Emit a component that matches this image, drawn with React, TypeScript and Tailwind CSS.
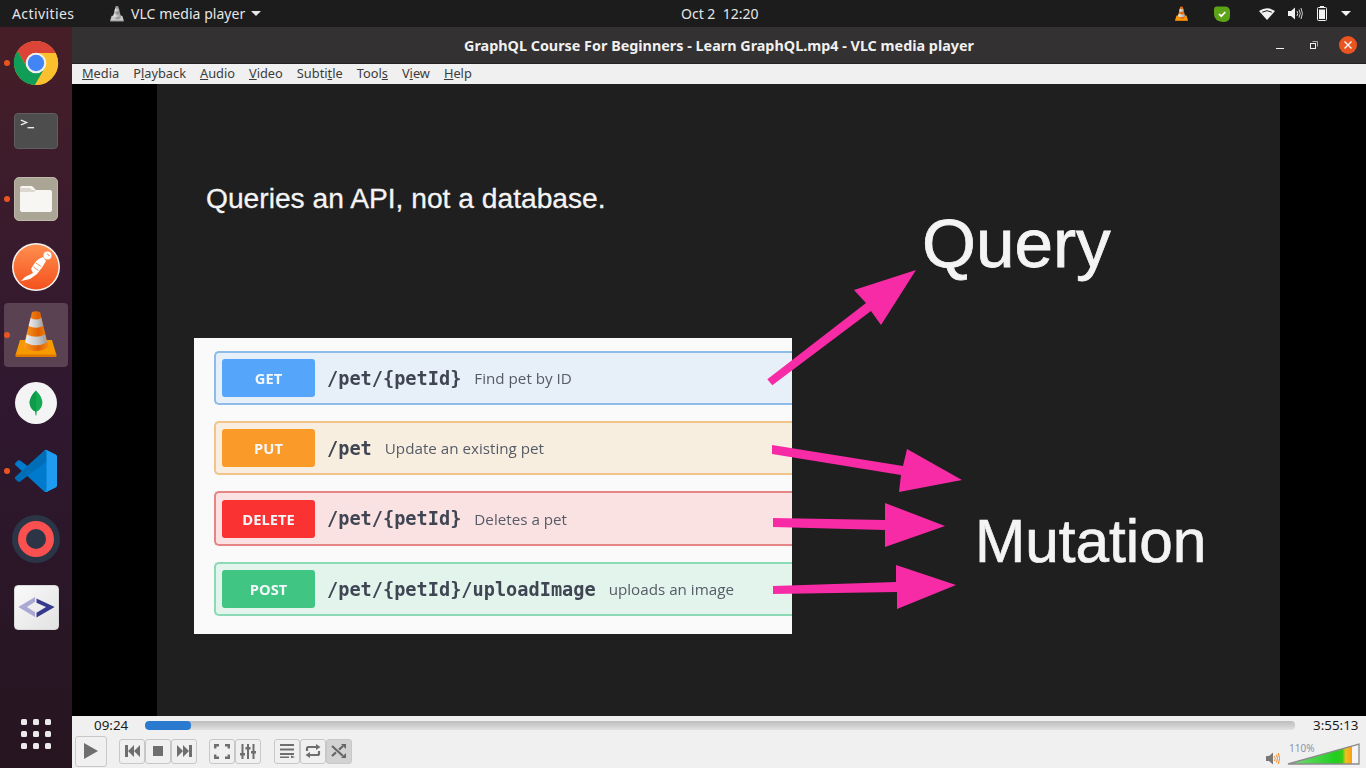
import React from "react";

const UI = "font-['Noto_Sans','Open_Sans',sans-serif]";

function Cone({ id, grey = false, className = "" }: { id: string; grey?: boolean; className?: string }) {
  const a = grey ? "#d8d8d8" : "#ffa028";
  const b = grey ? "#8a8a8a" : "#e06000";
  return (
    <svg viewBox="0 0 48 48" className={className}>
      <defs>
        <linearGradient id={id} x1="0" x2="1" y1="0" y2="0">
          <stop offset="0" stopColor={a} />
          <stop offset="0.6" stopColor={b} />
          <stop offset="1" stopColor={grey ? "#b0b0b0" : "#f08a18"} />
        </linearGradient>
        <linearGradient id={`${id}b`} x1="0" x2="1" y1="0" y2="0">
          <stop offset="0" stopColor="#efefef" />
          <stop offset="0.55" stopColor={grey ? "#bdbdbd" : "#c9c9c9"} />
          <stop offset="1" stopColor="#9c9c9c" />
        </linearGradient>
      </defs>
      <path d="M8 29 L3.5 44 Q3.3 46 5 46 H43 Q44.7 46 44.4 44 L40 29 Z" fill={grey ? "#c8c8c8" : "#f79a00"} />
      <path d="M3.6 43.5 Q3.3 46 5 46 H43 Q44.7 46 44.4 43.5 Z" fill={grey ? "#8d8d8d" : "#e07800"} />
      <path d="M20 1 Q24 -0.5 28 1 L36.5 36 Q24 44 11.5 36 Z" fill={`url(#${id})`} />
      <path d="M18.6 7 Q24 10 29.4 7 L31.3 15 Q24 18.5 16.7 15 Z" fill={`url(#${id}b)`} />
      <path d="M14.9 23.5 Q24 28 33.1 23.5 L34.9 31.5 Q24 37 13.1 31.5 Z" fill={`url(#${id}b)`} />
    </svg>
  );
}

function Chrome() {
  const p = "M24 14 L43.6 14 A22 22 0 0 0 5.54 12.03 L15.34 29 A10 10 0 0 1 24 14 Z";
  return (
    <svg viewBox="0 0 48 48" className="w-[48px] h-[48px]">
      <circle cx="24" cy="24" r="22" fill="#fbc02d" />
      <path d={p} fill="#db4437" />
      <path d={p} fill="#fbc02d" transform="rotate(120 24 24)" />
      <path d={p} fill="#0f9d58" transform="rotate(240 24 24)" />
      <circle cx="24" cy="24" r="10.3" fill="#f1f1f1" />
      <circle cx="24" cy="24" r="8.2" fill="#4285f4" />
    </svg>
  );
}

function Terminal() {
  return (
    <div className="w-[44px] h-[36px] rounded-[4px] bg-[#4d4d4d] border border-[#5f5f5f] flex">
      <svg viewBox="0 0 44 36" className="w-full h-full">
        <path d="M6 6.5 L12 9 L6 11.5" fill="none" stroke="#f2f2f2" strokeWidth="1.4" />
        <path d="M13 14.5 H20" stroke="#f2f2f2" strokeWidth="1.4" />
      </svg>
    </div>
  );
}

function Files() {
  return (
    <div className="w-[44px] h-[44px] rounded-[5px] bg-[#aba595] flex items-center justify-center border border-[#bdb8a9]">
      <svg viewBox="0 0 32 28" className="w-[32px] h-[28px]">
        <path d="M2 1 H12 L16 5 H30 Q32 5 32 7 V25 Q32 27 30 27 H2 Q0 27 0 25 V3 Q0 1 2 1Z" fill="#f8f6f3" />
        <path d="M0 7 H14 L16 5 H12 L10 3 H0Z" fill="#dcd8cf" />
      </svg>
    </div>
  );
}

function Postman() {
  return (
    <svg viewBox="0 0 48 48" className="w-[48px] h-[48px]">
      <defs>
        <linearGradient id="pm" x1="0" x2="0" y1="0" y2="1">
          <stop offset="0" stopColor="#ff8f4f" />
          <stop offset="1" stopColor="#f4511e" />
        </linearGradient>
      </defs>
      <circle cx="24" cy="24" r="24" fill="#f7f3f0" />
      <circle cx="24" cy="24" r="22.5" fill="url(#pm)" />
      <path d="M31 14 Q25 15 19 26 L21 30 L13 34 L9 38 L18 36 L25 31 Q31 24 34 18Z" fill="#fff" />
      <path d="M24 20 L29 23.5 M21.5 24 L26.5 27.5" stroke="#ff8a50" strokeWidth="1" />
      <circle cx="35.5" cy="12.5" r="4" fill="#fff" />
      <path d="M35 10.5 L37.5 13" stroke="#f4622a" strokeWidth="1" />
    </svg>
  );
}

function Mongo() {
  return (
    <div className="w-[42px] h-[42px] rounded-full bg-[#f4f4f4] flex items-center justify-center">
      <svg viewBox="0 0 20 36" className="w-[14px] h-[28px]">
        <path d="M10 0 Q20 10 19 19 Q18 27 11 30 L10.5 36 L9.5 36 L9 30 Q2 27 1 19 Q0 10 10 0Z" fill="#13aa52" />
        <path d="M10 0 Q0 10 1 19 Q2 27 9 30 L10 36Z" fill="#0f9b4a" />
      </svg>
    </div>
  );
}

function VSCode() {
  return (
    <svg viewBox="0 0 100 100" className="w-[42px] h-[42px]">
      <path fill="#007acc" d="M70.9119 99.3171C72.4869 99.9307 74.2828 99.8914 75.8725 99.1264L96.4608 89.2197C98.6242 88.1787 100 85.9892 100 83.5872V16.4133C100 14.0113 98.6243 11.8218 96.4609 10.7808L75.8725 0.873756C73.7862 -0.130129 71.3446 0.11576 69.5135 1.44695C69.252 1.63711 69.0028 1.84943 68.769 2.08341L29.3551 38.0415L12.1872 25.0096C10.589 23.7965 8.35363 23.8959 6.86933 25.2461L1.36303 30.2549C-0.452552 31.9064 -0.454633 34.7627 1.35853 36.417L16.2471 50.0001L1.35853 63.5832C-0.454633 65.2374 -0.452552 68.0938 1.36303 69.7453L6.86933 74.7541C8.35363 76.1043 10.589 76.2037 12.1872 74.9905L29.3551 61.9587L68.769 97.9167C69.3925 98.5406 70.1246 99.0104 70.9119 99.3171ZM75.0152 27.2989L45.1091 50.0001L75.0152 72.7012V27.2989Z" />
      <path fill="#0065a9" d="M96.4614 10.7962L75.8569 0.875542C73.4719 -0.272773 70.6217 0.211611 68.75 2.08333L1.29858 63.5832C-0.515693 65.2373 -0.513607 68.0937 1.30308 69.7452L6.81272 74.754C8.29793 76.1042 10.5347 76.2036 12.1338 74.9905L93.3609 13.3699C96.086 11.3026 100 13.2462 100 16.6667V16.4275C100 14.0265 98.6246 11.8378 96.4614 10.7962Z" opacity="0.6" />
      <path fill="#1f9cf0" d="M75.8578 99.1263C73.4721 100.274 70.6219 99.7885 68.75 97.9166C71.0564 100.223 75 98.5895 75 95.3278V4.67213C75 1.41039 71.0564 -0.223106 68.75 2.08329C70.6219 0.211402 73.4721 -0.273666 75.8578 0.873633L96.4587 10.7807C98.6234 11.8217 100 14.0112 100 16.4132V83.5871C100 85.9891 98.6234 88.1786 96.4586 89.2196L75.8578 99.1263Z" />
    </svg>
  );
}

function Ring() {
  return (
    <svg viewBox="0 0 48 48" className="w-[48px] h-[48px]">
      <circle cx="24" cy="24" r="24" fill="#2b3546" />
      <circle cx="24" cy="24" r="14" fill="none" stroke="#fb5050" strokeWidth="8" />
    </svg>
  );
}

function Sqlite() {
  return (
    <div className="w-[45px] h-[45px] rounded-[4px] border border-[#d8d8d8] bg-gradient-to-br from-[#fafafa] to-[#e2e2e2]">
      <svg viewBox="0 0 45 45" className="w-full h-full">
        <path d="M3.5 22 L21 11.5 V16.5 L12.5 22 L21 27.5 V32.5 Z" fill="#a9a9d3" />
        <path d="M41.5 22 L22.5 13 V17.5 L32.5 22 L22.5 28 V33 Z" fill="#363a8e" />
      </svg>
    </div>
  );
}

function DockItem({ dot, active, children }: { dot?: boolean; active?: boolean; children: React.ReactNode }) {
  return (
    <div className="relative h-[68px] w-[72px] flex items-center justify-center">
      {active && <div className="absolute left-[4px] top-[2px] w-[64px] h-[64px] rounded-[4px] bg-[#5a4253]" />}
      {dot && <div className="absolute left-[4px] top-[31px] w-[6px] h-[6px] rounded-full bg-[#e95420]" />}
      <div className="relative flex">{children}</div>
    </div>
  );
}

function Dock() {
  return (
    <div className="w-[72px] shrink-0 flex flex-col pt-[2px] bg-gradient-to-b from-[#461e27] via-[#2f1830] to-[#26151f]">
      <DockItem dot><Chrome /></DockItem>
      <DockItem><Terminal /></DockItem>
      <DockItem dot><Files /></DockItem>
      <DockItem><Postman /></DockItem>
      <DockItem dot active><Cone id="dockcone" className="w-[48px] h-[48px]" /></DockItem>
      <DockItem><Mongo /></DockItem>
      <DockItem dot><VSCode /></DockItem>
      <DockItem><Ring /></DockItem>
      <DockItem><Sqlite /></DockItem>
      <div className="mt-auto mb-[19px] ml-[21px] grid grid-cols-3 gap-[6px] w-fit">
        {Array.from({ length: 9 }).map((_, i) => (
          <div key={i} className="w-[6px] h-[6px] rounded-[1.5px] bg-[#ebe9ea]" />
        ))}
      </div>
    </div>
  );
}

function TopBar() {
  return (
    <div className={`h-[27px] shrink-0 bg-[#1c1c1c] text-[#e6e6e6] text-[14px] flex items-center relative ${UI}`}>
      <span className="ml-[12px] w-[62px] whitespace-nowrap tracking-[0.4px]">Activities</span>
      <Cone id="barcone" grey className="ml-[35px] w-[16px] h-[16px]" />
      <span className="ml-[6px] whitespace-nowrap tracking-[0.05px]">VLC media player</span>
      <svg viewBox="0 0 10 5" className="ml-[6px] w-[10px] h-[5px]"><path d="M0 0H10L5 5Z" fill="#e6e6e6" /></svg>
      <span className="absolute left-[681px] top-[3px] whitespace-pre">Oct 2  12:20</span>
      <div className="ml-auto flex items-center">
        <Cone id="traycone" className="w-[15px] h-[16px]" />
        <svg viewBox="0 0 16 16" className="ml-[25px] w-[16px] h-[16px]">
          <path d="M3 0.5 H11 Q16 0.5 16 6 V10 Q16 16 9 16 Q0 15 0 8 V3 Q0 0.5 3 0.5Z" fill="#5da318" />
          <path d="M5 8 L7.3 10.2 L11.3 6" fill="none" stroke="#fff" strokeWidth="1.7" />
        </svg>
        <svg viewBox="0 0 16 12" className="ml-[29px] w-[16px] h-[12px]">
          <path d="M0 3 Q8 -2.5 16 3 L8 12Z" fill="#f2f2f2" />
          <path d="M3.2 4.2 Q8 1.2 12.8 4.2" stroke="#1c1c1c" strokeWidth="1" fill="none" />
        </svg>
        <svg viewBox="0 0 15 13" className="ml-[13px] w-[15px] h-[13px]">
          <path d="M0 4 H3 L7 0.5 V12.5 L3 9 H0Z" fill="#f2f2f2" />
          <path d="M9 4 Q10.5 6.5 9 9 M11 2.5 Q13.5 6.5 11 10.5 M13 1 Q15.8 6.5 13 12" stroke="#f2f2f2" strokeWidth="1" fill="none" opacity="0.85" />
        </svg>
        <svg viewBox="0 0 10 15" className="ml-[14px] w-[10px] h-[15px]">
          <rect x="0.5" y="1.5" width="9" height="13" rx="1" fill="none" stroke="#f2f2f2" />
          <rect x="3" y="0" width="4" height="1.5" fill="#f2f2f2" />
          <rect x="2" y="3.5" width="6" height="9.5" fill="#f2f2f2" />
        </svg>
        <svg viewBox="0 0 10 5" className="ml-[14px] mr-[15px] w-[10px] h-[5px]"><path d="M0 0H10L5 5Z" fill="#f2f2f2" /></svg>
      </div>
    </div>
  );
}

function TitleBar() {
  return (
    <div className={`h-[37px] shrink-0 bg-[#333131] border-b border-[#222] grid grid-cols-[1fr_auto_1fr] items-center ${UI}`}>
      <div />
      <span className="text-[14.36px] font-bold text-[#f0f0f0] whitespace-nowrap pt-[1px]">GraphQL Course For Beginners - Learn GraphQL.mp4 - VLC media player</span>
      <div className="flex items-center justify-end pr-[9px]">
        <div className="w-[8px] h-[1px] bg-[#f0f0f0] mt-[6px]" />
        <svg viewBox="0 0 8 8" className="ml-[26px] w-[8px] h-[8px]">
          <path d="M2.5 0.5 H7.5 V5.5" fill="none" stroke="#aaa" />
          <rect x="0.5" y="2.5" width="5" height="5" fill="none" stroke="#f0f0f0" />
        </svg>
        <div className="ml-[21px] w-[18px] h-[18px] rounded-full bg-[#e95420] flex items-center justify-center">
          <svg viewBox="0 0 8 8" className="w-[8px] h-[8px]"><path d="M0.5 0.5 L7.5 7.5 M7.5 0.5 L0.5 7.5" stroke="#fff" strokeWidth="1.3" /></svg>
        </div>
      </div>
    </div>
  );
}

const menus: [string, string, string][] = [
  ["", "M", "edia"],
  ["P", "l", "ayback"],
  ["", "A", "udio"],
  ["", "V", "ideo"],
  ["Subti", "t", "le"],
  ["Tool", "s", ""],
  ["V", "i", "ew"],
  ["", "H", "elp"],
];

function MenuBar() {
  return (
    <div className={`h-[20px] shrink-0 bg-[#f0f0f0] text-[#3c3c3c] text-[12.8px] flex items-center pl-[3px] ${UI}`}>
      {menus.map(([a, b, c], i) => (
        <span key={i} className="px-[7px] whitespace-nowrap">
          {a}
          <span className="underline">{b}</span>
          {c}
        </span>
      ))}
    </div>
  );
}

const rows = [
  { m: "GET", p: "/pet/{petId}", d: "Find pet by ID", row: "bg-[#e7f0f9] border-[#8dbcea]", b: "bg-[#55a5fb]", h: "h-[54px]" },
  { m: "PUT", p: "/pet", d: "Update an existing pet", row: "bg-[#f8eee0] border-[#f1c48c]", b: "bg-[#fa9a28]", h: "h-[54px]" },
  { m: "DELETE", p: "/pet/{petId}", d: "Deletes a pet", row: "bg-[#fae2e2] border-[#e58586]", b: "bg-[#fa3232]", h: "h-[55px]" },
  { m: "POST", p: "/pet/{petId}/uploadImage", d: "uploads an image", row: "bg-[#e2f4ec] border-[#8bdab6]", b: "bg-[#40c583]", h: "h-[54px]" },
];

function Swagger() {
  return (
    <div className="ml-[37px] mt-[124px] w-[598px] h-[296px] bg-[#fafafa] pl-[20px] pt-[13px] flex flex-col gap-[16px] blur-[0.4px]">
      {rows.map((r) => (
        <div key={r.m} className={`${r.h} ${r.row} border-2 border-r-0 rounded-l-[5px] flex items-center pl-[6px]`}>
          <div className={`${r.b} w-[93px] h-[38px] rounded-[3px] flex items-center justify-center pt-[1px] text-[#f4f8fb] text-[14.7px] font-bold font-['Open_Sans',sans-serif]`}>
            {r.m}
          </div>
          <span className="ml-[12px] mt-[1px] text-[18.6px] font-bold text-[#3f4553] font-['DejaVu_Sans_Mono',monospace] whitespace-nowrap">{r.p}</span>
          <span className="ml-[13px] mt-[1px] text-[15.2px] text-[#555b67] font-['Open_Sans',sans-serif] whitespace-nowrap">{r.d}</span>
        </div>
      ))}
    </div>
  );
}

function Arrows() {
  const pts = [
    "767.3,379.3 866,303 854,290 916,270 881,325 871,311 772.3,385.3",
    "772,445 903,466 907,449 962,480 899,492 901,475 772,454",
    "773,518 885,520 885,503 945,526 885,547 885,530 773,527",
    "773,586 896,582 896,565 956,585 897,609 897,592 773,594",
  ];
  return (
    <svg viewBox="157 84 1123 632" className="absolute left-0 top-0 w-[1123px] h-[632px]">
      {pts.map((p) => (
        <polygon key={p} points={p} fill="#f72ba6" />
      ))}
    </svg>
  );
}

function Video() {
  return (
    <div className="flex-1 min-h-0 bg-black pl-[85px]">
      <div className="relative w-[1123px] h-full bg-[#1f1f1f] font-['Liberation_Sans',sans-serif] text-[#f4f4f4]">
        <div className="pl-[49px] pt-[98px] text-[28.2px] leading-[32px] whitespace-nowrap [-webkit-text-stroke:0.3px_#f4f4f4]">Queries an API, not a database.</div>
        <Swagger />
        <Arrows />
        <div className="absolute left-[765px] top-[121px] text-[69.3px] leading-[76px] [-webkit-text-stroke:0.8px_#f4f4f4]">Query</div>
        <div className="absolute left-[818px] top-[423px] text-[60.3px] leading-[68px] [-webkit-text-stroke:0.7px_#f4f4f4]">Mutation</div>
      </div>
    </div>
  );
}

const I = "fill-[#6e6e6e]";

function CtlBtn({ pressed, children }: { pressed?: boolean; children: React.ReactNode }) {
  return (
    <div className={`w-[26px] h-[25px] border border-[#c8c8c8] rounded-[3px] flex items-center justify-center ${pressed ? "bg-[#d2d2d2]" : "bg-[#f0f0f0]"}`}>
      {children}
    </div>
  );
}

function Controls() {
  return (
    <div className={`h-[52px] shrink-0 bg-[#f0f0f0] flex flex-col ${UI}`}>
      <div className="h-[17px] flex items-center pl-[22px] pr-[7px] pt-[2px] text-[13.4px] text-[#1a1a1a]">
        <span className="w-[34px] whitespace-nowrap">09:24</span>
        <div className="ml-[17px] flex-1 h-[9px] rounded-[4px] bg-gradient-to-b from-[#bdbdbd] to-[#e0e0e0] flex overflow-hidden">
          <div className="w-[46px] h-full rounded-[4px] bg-[#2a7bd0]" />
        </div>
        <span className="ml-[18px] w-[46px] whitespace-nowrap">3:55:13</span>
      </div>
      <div className="flex items-center pl-[3px] flex-1 pt-[1px]">
        <div className="w-[32px] h-[31px] border border-[#c8c8c8] rounded-[3px] flex items-center justify-center">
          <svg viewBox="0 0 14 16" className="w-[14px] h-[16px]"><path d="M0 0 L14 8 L0 16Z" className={I} /></svg>
        </div>
        <div className="ml-[12px] flex">
          <CtlBtn>
            <svg viewBox="0 0 15 12" className="w-[15px] h-[12px]"><path d="M0 0H3V12H0Z M9 0V12L3 6Z M15 0V12L9 6Z" className={I} /></svg>
          </CtlBtn>
          <CtlBtn>
            <div className="w-[10px] h-[10px] bg-[#6e6e6e]" />
          </CtlBtn>
          <CtlBtn>
            <svg viewBox="0 0 15 12" className="w-[15px] h-[12px]"><path d="M15 0H12V12H15Z M6 0V12L12 6Z M0 0V12L6 6Z" className={I} /></svg>
          </CtlBtn>
        </div>
        <div className="ml-[12px] flex">
          <CtlBtn>
            <svg viewBox="0 0 16 15" className="w-[16px] h-[15px]"><path d="M1.2 4.5V1.2H5M11 1.2H14.8V4.5M14.8 10.5V13.8H11M5 13.8H1.2V10.5" fill="none" stroke="#6e6e6e" strokeWidth="2.4" /></svg>
          </CtlBtn>
          <CtlBtn>
            <svg viewBox="0 0 16 15" className="w-[16px] h-[15px]"><path d="M2.5 0V15M8 0V15M13.5 0V15" stroke="#6e6e6e" strokeWidth="2" /><path d="M0 9H5V11.5H0Z M5.5 3H10.5V5.5H5.5Z M11 7H16V9.5H11Z" className={I} /></svg>
          </CtlBtn>
        </div>
        <div className="ml-[13px] flex">
          <CtlBtn>
            <svg viewBox="0 0 15 14" className="w-[15px] h-[14px]"><path d="M0 0H14V2H0Z M0 4.5H14V6.5H0Z M0 9H14V11H0Z M0 12.5H9V14H0Z M11 11.5 L15 13 L11 14.5Z" className={I} /></svg>
          </CtlBtn>
          <CtlBtn>
            <svg viewBox="0 0 16 14" className="w-[16px] h-[14px]"><path d="M2 7V4.5Q2 3 3.5 3H12M14 7V9.5Q14 11 12.5 11H4" fill="none" stroke="#6e6e6e" strokeWidth="2.2" /><path d="M11 0 L15.5 3 L11 6Z M5 8 L0.5 11 L5 14Z" className={I} /></svg>
          </CtlBtn>
          <CtlBtn pressed>
            <svg viewBox="0 0 16 14" className="w-[16px] h-[14px]"><path d="M1 2 L12 12 M1 12 L5 8.4 M8 5.6 L12 2" fill="none" stroke="#666" strokeWidth="2.2" /><path d="M10 0H15V5Z M10 14H15V9Z" fill="#666" /></svg>
          </CtlBtn>
        </div>
        <div className="ml-auto flex items-end mr-[6px] pt-[5px]">
          <svg viewBox="0 0 14 13" className="w-[14px] h-[13px]">
            <path d="M0 4H3L7 0.5V12.5L3 9H0Z" fill="#777" />
            <path d="M8.5 4Q10 6.5 8.5 9 M10.5 2.5Q12.5 6.5 10.5 10.5 M12.3 1Q15 6.5 12.3 12" stroke="#f08a24" strokeWidth="1" fill="none" />
          </svg>
          <div className="relative ml-[7px] w-[73px] h-[22px]">
            <svg viewBox="0 0 73 22" className="w-[73px] h-[22px]">
              <defs>
                <linearGradient id="vol" x1="0" x2="1" y1="0" y2="0">
                  <stop offset="0" stopColor="#7fd87f" />
                  <stop offset="0.75" stopColor="#1fcf1f" />
                  <stop offset="0.85" stopColor="#3acb1a" />
                  <stop offset="0.9" stopColor="#f0c020" />
                  <stop offset="1" stopColor="#ff9c10" />
                </linearGradient>
              </defs>
              <polygon points="1,21 72,1 72,21" fill="#f4f4f4" />
              <polygon points="1,21 65,3 65,21" fill="url(#vol)" />
              <polygon points="1,21 72,1 72,21" fill="none" stroke="#8a8a8a" strokeWidth="1.3" />
            </svg>
            <span className="absolute left-[2px] top-[-1px] text-[10px] leading-[12px] text-[#8a93a8]">110%</span>
          </div>
        </div>
      </div>
    </div>
  );
}

export default function App() {
  return (
    <div className="w-[1366px] h-[768px] flex flex-col overflow-hidden">
      <TopBar />
      <div className="flex flex-1 min-h-0">
        <Dock />
        <div className="flex-1 min-w-0 flex flex-col">
          <TitleBar />
          <MenuBar />
          <Video />
          <Controls />
        </div>
      </div>
    </div>
  );
}
